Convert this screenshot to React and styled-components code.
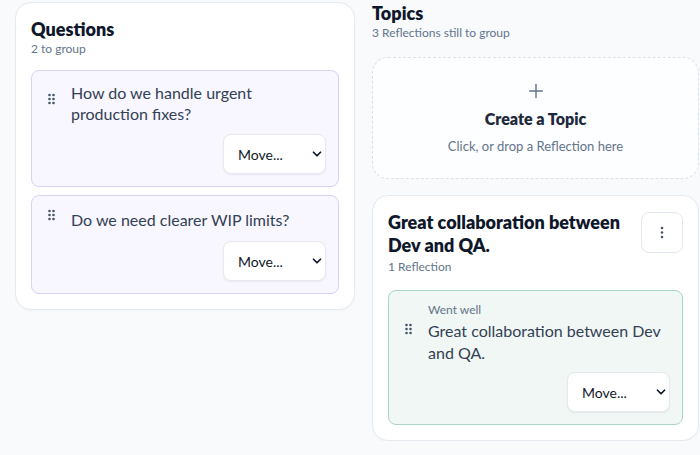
import React from "react";
import styled, { createGlobalStyle } from "styled-components";
import { ChevronDown, Plus } from "lucide-react";

const GlobalStyle = createGlobalStyle`
  * { box-sizing: border-box; }
  html, body { margin: 0; padding: 0; background: #f8fafc; }
  body {
    font-family: Lato, "Noto Sans", "Liberation Sans", sans-serif;
    color: #0f172a;
    overflow: hidden;
  }
`;

const Board = styled.div`
  display: grid;
  grid-template-columns: 340px 1fr;
  gap: 17px;
  padding: 2px 1px 0 15px;
  align-items: start;
`;

const Panel = styled.section`
  background: #fff;
  border: 1px solid #e5e9f0;
  border-radius: 16px;
  padding: 15px;
  box-shadow: 0 1px 2px rgba(15, 23, 42, 0.03);
`;

const Column = styled.section`
  display: flex;
  flex-direction: column;
`;

const Header = styled.header`
  margin-bottom: ${(p) => p.$gap}px;
`;

const Title = styled.h2`
  margin: 0;
  font-size: 18px;
  line-height: 23px;
  font-weight: 800;
  color: #0f172a;
`;

const Sub = styled.div`
  font-size: 12px;
  line-height: 16px;
  color: #64748b;
  margin-top: ${(p) => p.$top || 0}px;
`;

const Stack = styled.div`
  display: flex;
  flex-direction: column;
  gap: ${(p) => p.$gap}px;
`;

const Card = styled.article`
  border-radius: 8px;
  border: 1px solid ${(p) => (p.$tone === "green" ? "#a9d5c3" : "#d9d1f6")};
  background: ${(p) => (p.$tone === "green" ? "#f1f7f4" : "#f8f6fe")};
  padding: 11px 12px 12px 16px;
  display: flex;
  flex-direction: column;
`;

const Row = styled.div`
  display: flex;
  align-items: center;
  gap: 15px;
  min-height: 24px;
`;

const Body = styled.div`
  flex: 1;
  min-width: 0;
  padding-right: ${(p) => p.$pr || 0}px;
`;

const Label = styled.div`
  font-size: 12px;
  line-height: 16px;
  color: #64748b;
  margin-bottom: 2px;
`;

const Text = styled.p`
  margin: 0;
  font-size: 16px;
  line-height: ${(p) => p.$lh || 22}px;
  color: #334155;
`;

const Actions = styled.div`
  display: flex;
  justify-content: flex-end;
  margin-top: ${(p) => p.$top || 10}px;
`;

const SelectWrap = styled.div`
  position: relative;
  width: 103px;
  height: 40px;
`;

const Select = styled.select`
  appearance: none;
  -webkit-appearance: none;
  width: 100%;
  height: 100%;
  border: 1px solid #e6e9ef;
  border-radius: 8px;
  background: #fff;
  padding: 0 28px 0 14px;
  font-family: inherit;
  font-size: 14px;
  color: #0f172a;
  box-shadow: 0 1px 2px rgba(15, 23, 42, 0.06);
  outline: none;
`;

const Chevron = styled(ChevronDown)`
  position: absolute;
  right: 2px;
  top: 13px;
  pointer-events: none;
  color: #0f172a;
`;

const DropZone = styled.button`
  all: unset;
  box-sizing: border-box;
  display: flex;
  flex-direction: column;
  align-items: center;
  height: 122px;
  padding-top: 22px;
  border: 1px dashed #d9e1ea;
  border-radius: 16px;
  background: #fdfeff;
  margin-bottom: 16px;
  cursor: pointer;
`;

const ZoneTitle = styled.div`
  margin-top: 7px;
  font-size: 16px;
  line-height: 20px;
  font-weight: 800;
  color: #1e293b;
`;

const ZoneHint = styled.div`
  margin-top: 8px;
  font-size: 13px;
  line-height: 18px;
  color: #64748b;
`;

const TopicHead = styled.div`
  display: flex;
  align-items: flex-start;
  justify-content: space-between;
  gap: 16px;
  margin-bottom: 15px;
`;

const IconButton = styled.button`
  all: unset;
  box-sizing: border-box;
  flex: none;
  width: 42px;
  height: 41px;
  margin-top: 1px;
  border: 1px solid #e2e8f0;
  border-radius: 8px;
  background: #fff;
  display: flex;
  align-items: center;
  justify-content: center;
`;

const Handle = () => (
  <svg width="8" height="14" viewBox="0 0 8 14" style={{ flex: "none", marginTop: -6 }}>
    {[2, 6, 10].map((y) =>
      [1.5, 5.5].map((x) => <circle key={`${x}-${y}`} cx={x} cy={y} r="1.3" fill="#475569" />)
    )}
  </svg>
);

const Kebab = () => (
  <svg width="4" height="13" viewBox="0 0 4 13">
    {[2, 6.5, 11].map((y) => (
      <circle key={y} cx="2" cy={y} r="1.3" fill="#475569" />
    ))}
  </svg>
);

const MoveSelect = () => (
  <SelectWrap>
    <Select defaultValue="">
      <option value="">Move...</option>
    </Select>
    <Chevron size={14} strokeWidth={3} />
  </SelectWrap>
);

const questions = ["How do we handle urgent production fixes?", "Do we need clearer WIP limits?"];

export default function App() {
  return (
    <>
      <GlobalStyle />
      <Board>
        <Panel>
          <Header $gap={13}>
            <Title>Questions</Title>
            <Sub>2 to group</Sub>
          </Header>
          <Stack $gap={8}>
            {questions.map((q) => (
              <Card key={q}>
                <Row>
                  <Handle />
                  <Body $pr={12}>
                    <Text $lh={21}>{q}</Text>
                  </Body>
                </Row>
                <Actions>
                  <MoveSelect />
                </Actions>
              </Card>
            ))}
          </Stack>
        </Panel>

        <Column>
          <Header $gap={16}>
            <Title>Topics</Title>
            <Sub>3 Reflections still to group</Sub>
          </Header>
          <DropZone type="button">
            <Plus size={22} strokeWidth={1.6} color="#64748b" />
            <ZoneTitle>Create a Topic</ZoneTitle>
            <ZoneHint>Click, or drop a Reflection here</ZoneHint>
          </DropZone>
          <Panel>
            <TopicHead>
              <div>
                <Title>Great collaboration between Dev and QA.</Title>
                <Sub $top={2}>1 Reflection</Sub>
              </div>
              <IconButton type="button" aria-label="Topic options">
                <Kebab />
              </IconButton>
            </TopicHead>
            <Card $tone="green">
              <Row>
                <Handle />
                <Body>
                  <Label>Went well</Label>
                  <Text>Great collaboration between Dev and QA.</Text>
                </Body>
              </Row>
              <Actions $top={8}>
                <MoveSelect />
              </Actions>
            </Card>
          </Panel>
        </Column>
      </Board>
    </>
  );
}
